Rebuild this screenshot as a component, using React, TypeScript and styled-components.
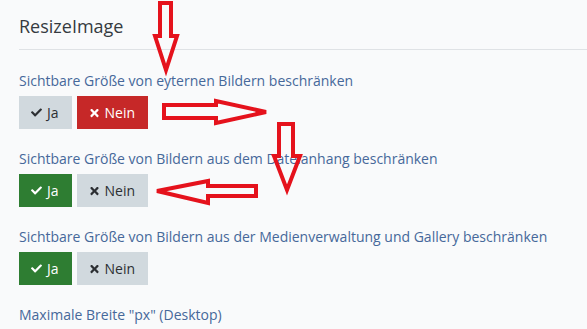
import styled, { createGlobalStyle } from "styled-components";
import { FaCheck, FaTimes } from "react-icons/fa";

type Choice = "ja" | "nein";

const options: { label: string; value: Choice }[] = [
  { label: "Sichtbare Größe von eyternen Bildern beschränken", value: "nein" },
  { label: "Sichtbare Größe von Bildern aus dem Dateianhang beschränken", value: "ja" },
  {
    label: "Sichtbare Größe von Bildern aus der Medienverwaltung und Gallery beschränken",
    value: "ja",
  },
];

export default function App() {
  return (
    <Page>
      <GlobalStyle />
      <Panel>
        <Title>ResizeImage</Title>
        {options.map((opt) => (
          <Group key={opt.label}>
            <Label>{opt.label}</Label>
            <Toggle>
              <Button $tone={opt.value === "ja" ? "green" : "grey"}>
                <Icon>
                  <FaCheck size={11} />
                </Icon>
                Ja
              </Button>
              <Button $tone={opt.value === "nein" ? "red" : "grey"}>
                <Icon>
                  <FaTimes size={12} />
                </Icon>
                Nein
              </Button>
            </Toggle>
          </Group>
        ))}
        <Label>Maximale Breite "px" (Desktop)</Label>
      </Panel>

      {/* hand-drawn annotation arrows over the form */}
      <Annotations viewBox="0 0 587 329">
        <polygon points="160,3 171,3 171,36 177,36 166,70 155,36 160,36" />
        <polygon points="164,105 216,105 216,101 266,112 216,123 216,118 164,118" />
        <polygon points="279,124 293,124 293,156 300,156 287,190 274,156 279,156" />
        <polygon points="256,186 256,196 208,196 208,203 157,191 208,181 208,186" />
      </Annotations>
    </Page>
  );
}

const GlobalStyle = createGlobalStyle`
  html, body {
    margin: 0;
    padding: 0;
    background: #f9fafb;
  }
  body {
    font-family: "Open Sans", "Liberation Sans", sans-serif;
  }
`;

const Page = styled.div`
  position: relative;
  width: 587px;
  height: 329px;
  overflow: hidden;
  background: #f9fafb;
`;

const Panel = styled.div`
  padding: 16px 0 0 19px;
`;

const Title = styled.h3`
  margin: 0 0 21px;
  padding-bottom: 13px;
  font-size: 18px;
  font-weight: 400;
  line-height: 20px;
  color: #353a40;
  border-bottom: 1px solid #dfe2e5;
`;

const Group = styled.div`
  margin-bottom: 20px;
`;

const Label = styled.div`
  font-size: 14px;
  line-height: 20px;
  color: #46689a;
  margin-bottom: 5px;
  white-space: nowrap;
`;

const Toggle = styled.div`
  display: flex;
  gap: 5px;
`;

const tones = {
  grey: { bg: "#d1d9de", fg: "#2c2f33" },
  green: { bg: "#2e7d32", fg: "#ffffff" },
  red: { bg: "#c62828", fg: "#ffffff" },
};

const Button = styled.button<{ $tone: keyof typeof tones }>`
  display: flex;
  align-items: center;
  gap: 5px;
  height: 33px;
  padding: 0 13px 0 12px;
  border: none;
  border-radius: 0;
  font-family: "Open Sans", "Liberation Sans", sans-serif;
  font-size: 14px;
  background: ${(p) => tones[p.$tone].bg};
  color: ${(p) => tones[p.$tone].fg};
`;

const Icon = styled.span`
  display: inline-flex;
  justify-content: center;
  width: 11px;
`;

const Annotations = styled.svg`
  position: absolute;
  inset: 0;
  width: 587px;
  height: 329px;
  pointer-events: none;

  polygon {
    fill: none;
    stroke: #e5121c;
    stroke-width: 4;
    stroke-linejoin: miter;
  }
`;
